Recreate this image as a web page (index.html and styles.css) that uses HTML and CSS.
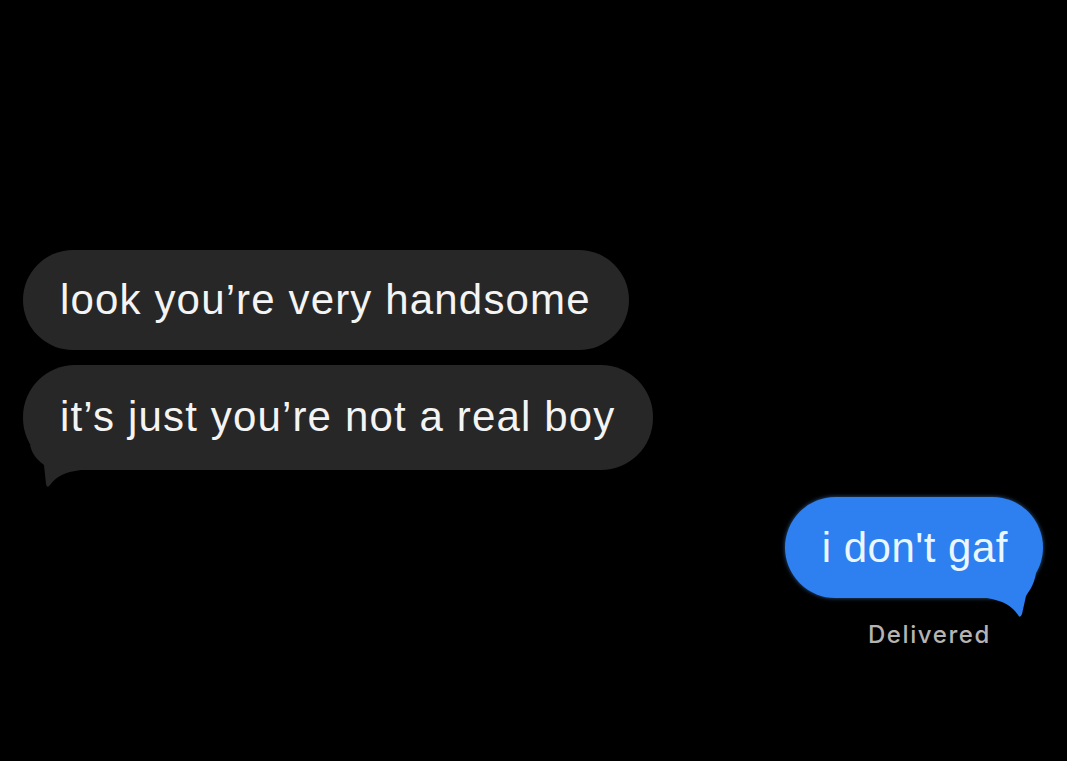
FILE: index.html
```html
<!DOCTYPE html>
<html lang="en">
<head>
<meta charset="utf-8">
<title>Messages</title>
<link rel="stylesheet" href="styles.css">
</head>
<body>
<main class="thread">
  <section class="incoming">
    <div class="bubble gray">look you’re very handsome</div>
    <div class="bubble gray tailed">it’s just you’re not a real boy
      <svg class="tail tail-left" width="60" height="50" viewBox="0 0 60 50" aria-hidden="true">
        <path d="M7 5 C10 18 18 22 21 25 L23 44 Q24 49 27 45 C33 37 41 32 58 30 L58 5 Z" fill="#272727"/>
      </svg>
    </div>
  </section>
  <section class="outgoing">
    <div class="bubble blue tailed">i don't gaf
      <svg class="tail tail-right" width="60" height="52" viewBox="0 0 60 52" aria-hidden="true">
        <path d="M53 5 C51 18 45 24 43 28 L39 46 Q37 51 35 47 C29 38 21 33 4 30 L4 5 Z" fill="#2e7ff0"/>
      </svg>
    </div>
    <div class="status">Delivered</div>
  </section>
</main>
</body>
</html>
```

FILE: styles.css
```css
html, body {
  margin: 0;
  padding: 0;
  background: #000;
  height: 100%;
}

body {
  font-family: "Liberation Sans", Arial, sans-serif;
  -webkit-font-smoothing: antialiased;
}

.thread {
  display: flex;
  flex-direction: column;
  padding: 250px 24px 0 23px;
}

.incoming {
  display: flex;
  flex-direction: column;
  align-items: flex-start;
  gap: 15px;
}

.outgoing {
  display: flex;
  flex-direction: column;
  align-items: flex-end;
  margin-top: 27px;
}

.bubble {
  position: relative;
  font-size: 42px;
  line-height: 48px;
  white-space: nowrap;
  border-radius: 52px;
}

.gray {
  background: #272727;
  color: #f4f4f4;
  letter-spacing: 1.15px;
  padding: 26px 38px 26px 37px;
}

.gray.tailed {
  padding-top: 28px;
  padding-bottom: 29px;
}

.blue {
  background: #2e7ff0;
  color: #eaf7ff;
  letter-spacing: 0.5px;
  padding: 27px 35px 26px 37px;
  box-shadow: 0 0 4px rgba(90, 160, 255, 0.55);
}

.tail {
  position: absolute;
  overflow: visible;
}

.tail-left {
  left: 0;
  bottom: -20px;
}

.tail-right {
  right: 0;
  bottom: -22px;
}

.status {
  margin-top: 23px;
  margin-right: 52px;
  font-family: "Inter", "Liberation Sans", sans-serif;
  font-size: 24px;
  letter-spacing: 1.6px;
  line-height: 28px;
  font-weight: 500;
  color: #b4b4b4;
}
```
